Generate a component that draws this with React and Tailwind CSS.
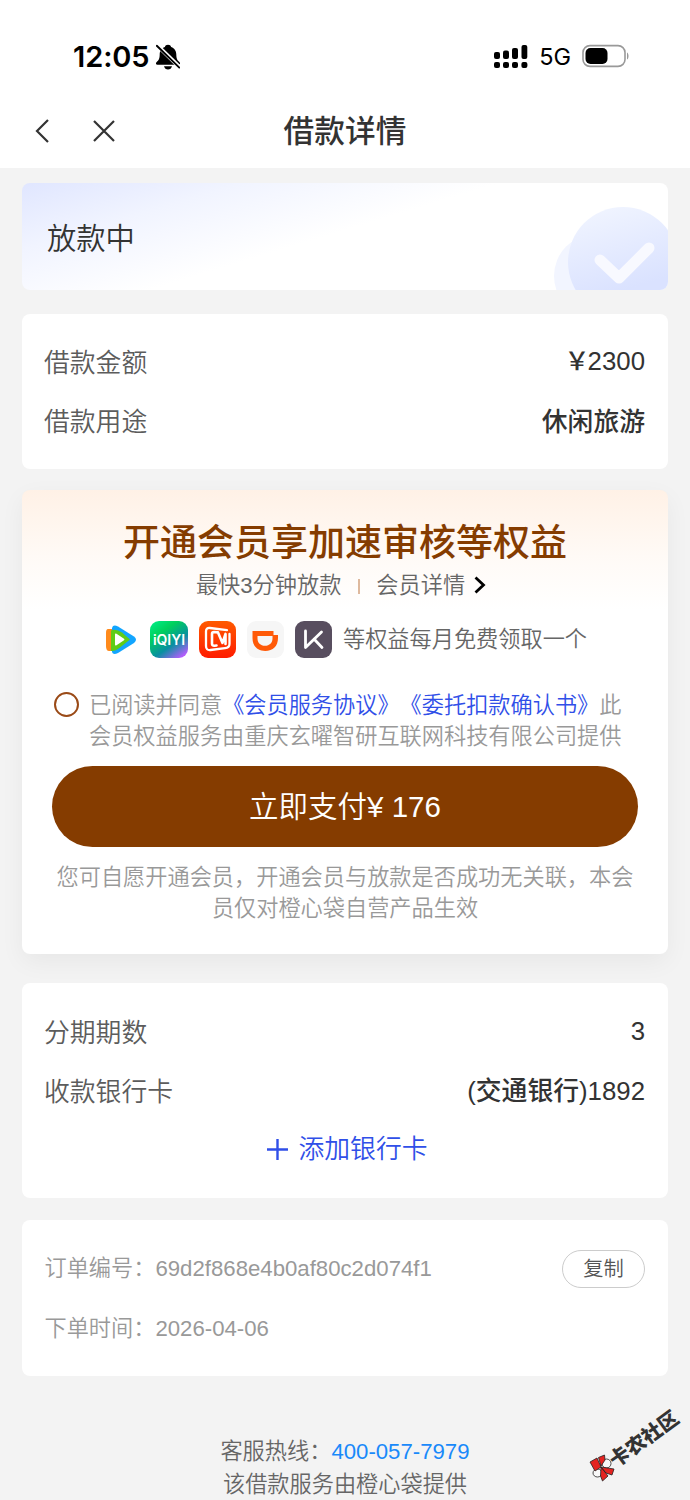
import React from "react";

function StatusBar() {
  return (
    <div className="flex h-[94px] items-start justify-between pt-[42px] pl-[73px] pr-[60px] text-black">
      <div className="flex items-center gap-[6px]">
        <span className="font-['Inter',sans-serif] text-[29px] leading-[29px] font-semibold tracking-[-0.1px]">12:05</span>
        <svg className="relative left-px" width="24" height="26" viewBox="0 0 24 26">
          <path d="M12 .8c-1.600 0-2.800.9-3.100 2.200C5.300 4.200 3.800 7.200 3.700 10.500c-.1 4.200-1 5.700-3 7.500-1.400 1.300-.9 2.700.7 2.700h21.200c1.600 0 2.100-1.400.7-2.700-2-1.800-2.900-3.300-3-7.500-.1-3.300-1.600-6.300-5.200-7.500C14.800 1.700 13.600.8 12 .8z" />
          <path d="M8 22.200h8c-.5 2-2 3.300-4 3.300s-3.500-1.300-4-3.300z" />
          <path d="M1 1.200 24 23.500" stroke="#fff" strokeWidth="4" />
          <path d="M.8 1.800 23.300 23.600" stroke="#000" strokeWidth="1.900" strokeLinecap="round" />
        </svg>
      </div>
      <div className="flex items-center">
        <svg width="34" height="25" viewBox="0 0 34 25">
          <rect x="0" y="8" width="6" height="7" rx="2" />
          <rect x="9" y="6.500" width="6" height="8.500" rx="2" />
          <rect x="18" y="4" width="6" height="11" rx="2" />
          <rect x="27.500" y="1" width="5.800" height="14" rx="2" />
          <rect x="0" y="18" width="6" height="6" rx="2" />
          <rect x="9" y="18" width="6" height="6" rx="2" />
          <rect x="18" y="18" width="6" height="6" rx="2" />
          <rect x="27.400" y="18" width="6" height="6" rx="2" />
        </svg>
        <span className="ml-[11px] pt-[2px] font-['Inter',sans-serif] text-[23.500px] leading-[26px] font-normal">5G</span>
        <svg className="ml-[11px]" width="48" height="24" viewBox="0 0 48 24">
          <rect x="1" y="1.600" width="42" height="20.800" rx="7" fill="none" stroke="#999" strokeWidth="1.600" />
          <rect x="3.500" y="4" width="22" height="16" rx="5" />
          <path d="M45 8.500c2 1 2 6 0 7z" fill="#999" />
        </svg>
      </div>
    </div>
  );
}

function NavBar() {
  return (
    <div className="grid h-[74px] grid-cols-[1fr_auto_1fr] items-center text-[#333]">
      <div className="flex items-center gap-[43px] pl-[35px]">
        <svg width="15" height="24" viewBox="0 0 15 24" fill="none" stroke="currentColor" strokeWidth="2.200">
          <path d="M13 1 2 12l11 11" />
        </svg>
        <svg width="22" height="22" viewBox="0 0 22 22" fill="none" stroke="currentColor" strokeWidth="2.200">
          <path d="m1 1 20 20M21 1 1 21" />
        </svg>
      </div>
      <h1 className="pt-[3px] text-[30.700px] font-medium">借款详情</h1>
    </div>
  );
}

function StatusCard() {
  return (
    <div className="flex h-[107px] items-center justify-between overflow-hidden rounded-lg bg-[linear-gradient(163deg,#e0e6ff_0%,#f1f4ff_22%,#ffffff_48%)] pl-[25px]">
      <span className="pt-[5px] text-[29.300px] font-[350] text-[#333]">放款中</span>
      <svg width="116" height="107" viewBox="0 0 116 107">
        <defs>
          <linearGradient id="disc" x1="0.3" y1="0" x2="0.600" y2="1">
            <stop offset="0" stopColor="#f0f4ff" />
            <stop offset="0.750" stopColor="#dae2ff" />
          </linearGradient>
        </defs>
        <circle cx="44" cy="93" r="42" fill="#f2f5ff" />
        <circle cx="71" cy="79" r="55" fill="url(#disc)" />
        <path d="m48 77 19 18 30-30" fill="none" stroke="#f8f9ff" strokeWidth="11" strokeLinecap="round" strokeLinejoin="round" />
      </svg>
    </div>
  );
}

function Row({ label, children }) {
  return (
    <div className="flex h-[59.500px] items-center justify-between text-[25.800px]">
      <span className="-ml-px pt-[3px] font-[350] text-[#5c5c5c]">{label}</span>
      <span className="font-medium text-[#333]">{children}</span>
    </div>
  );
}

function TencentVideo() {
  return (
    <svg width="34" height="37" viewBox="0 0 34 37">
      <path d="M3 8h6v22H4Q1 30 1 25V12Q1 8 3 8z" fill="#ff8a1c" />
      <path d="M7 7q1-4 6-1.500l16 10q4 3 0 6.500L13 32q-5 2.500-6-1z" fill="#12a5ff" />
      <path d="M6 9.500q5-2 11 2l8 7-10 8q-5 4-9 3.500z" fill="#5fcc18" />
      <path d="M10 13.500v10q0 1.500 1.500.7l7.500-5q1-.7 0-1.500l-7.500-5q-1.500-.8-1.500.8z" fill="#fff" />
    </svg>
  );
}

function Iqiyi() {
  return (
    <div className="flex h-[37px] w-[38px] items-center justify-center rounded-[9px] bg-[linear-gradient(145deg,#00f08a_0%,#00d05c_30%,#0890a0_62%,#b85cff_92%)]">
      <span className="font-['Inter',sans-serif] text-[14px] leading-none font-semibold text-white">iQIYI</span>
    </div>
  );
}

function MangoTv() {
  return (
    <svg width="37" height="37" viewBox="0 0 37 37">
      <defs>
        <linearGradient id="mango" x1="0" y1="0" x2="0" y2="1">
          <stop offset="0" stopColor="#ff5a00" />
          <stop offset="1" stopColor="#ff1c00" />
        </linearGradient>
      </defs>
      <rect width="37" height="37" rx="9" fill="url(#mango)" />
      <g fill="none" stroke="#fff" strokeLinejoin="round" strokeLinecap="round">
        <path d="M28 9.200 11 7Q7 6.500 7 10.500V25q0 4.500 4.500 4L26 27.200q4.500-.5 4.500-4.200V13" strokeWidth="2.300" />
        <path d="M17.500 24.500l-2 .2q-2.500.2-2.500-2V13q0-2 2-2l4 .4 4.500 10.500 3-9V23" strokeWidth="2.600" />
      </g>
    </svg>
  );
}

function Didi() {
  return (
    <svg width="37" height="37" viewBox="0 0 37 37">
      <rect width="37" height="37" rx="9" fill="#f6f6f6" />
      <path
        d="M5.500 10H26.500v4H31v3c0 8-5 13-12.800 13S5.500 25 5.500 17zM10.500 15v2.500c0 4.200 3 7.300 7.500 7.300s7.500-3.100 7.500-7.300V15z"
        fill="#ff5a08"
        fillRule="evenodd"
      />
    </svg>
  );
}

function Keep() {
  return (
    <svg width="37" height="37" viewBox="0 0 37 37">
      <rect width="37" height="37" rx="9" fill="#584e5f" />
      <path d="M10.500 10v16.500l16-15.500M19 18l8 8.500" fill="none" stroke="#fff" strokeWidth="2.800" strokeLinecap="round" strokeLinejoin="round" />
    </svg>
  );
}

function MemberCard() {
  return (
    <section className="mt-[21px] h-[464px] rounded-lg bg-white bg-[linear-gradient(180deg,#fff1e6_0%,#fffaf6_55%,#ffffff_100%)] bg-[length:100%_120px] bg-no-repeat px-[30px] pt-[29px] shadow-[0_8px_24px_rgba(0,0,0,0.05)]">
      <h2 className="text-center text-[37px] leading-[50px] font-medium whitespace-nowrap text-[#853c00]">开通会员享加速审核等权益</h2>
      <div className="flex h-[34px] items-center justify-center pr-[8px] text-[22.200px] font-[350] text-[#666]">
        <span>最快3分钟放款</span>
        <i className="mr-[16px] ml-[17px] h-[15px] w-[2px] bg-[#deb99e]" />
        <span>会员详情</span>
        <svg className="mb-[2px] ml-[9px]" width="12" height="18" viewBox="0 0 12 18" fill="none" stroke="#000" strokeWidth="2.800">
          <path d="m1.500 1.500 8 7.500-8 7.500" />
        </svg>
      </div>
      <div className="mt-[18px] flex h-[37px] items-center pl-[53px] text-[22.200px] font-[350] text-[#666]">
        <div className="flex items-center gap-[11px]">
          <TencentVideo />
          <Iqiyi />
          <MangoTv />
          <Didi />
          <Keep />
        </div>
        <span className="ml-[11px] whitespace-nowrap">等权益每月免费领取一个</span>
      </div>
      <div className="mt-[32px] flex h-[62px] items-start pl-[2px] text-[22.200px] leading-[31px] font-[350] text-[#999]">
        <span className="mt-[2px] mr-[10px] size-[25px] shrink-0 rounded-full border-2 border-[#9a4a17]" />
        <p className="whitespace-nowrap [text-spacing-trim:space-all]">
          已阅读并同意<span className="text-[#304fe8]">《会员服务协议》《委托扣款确认书》</span>此
          <br />
          会员权益服务由重庆玄曜智研互联网科技有限公司提供
        </p>
      </div>
      <button className="mt-[14px] flex h-[81px] w-full items-center justify-center rounded-full bg-[#853c00] pt-px text-[29.500px] font-[350] text-white">
        立即支付¥ 176
      </button>
      <p className="mt-[15px] text-center text-[22.200px] leading-[31px] font-[350] whitespace-nowrap text-[#999]">
        您可自愿开通会员，开通会员与放款是否成功无关联，本会
        <br />
        员仅对橙心袋自营产品生效
      </p>
    </section>
  );
}

function Watermark() {
  return (
    <div className="absolute top-[1400px] left-[588px] h-[90px] w-[102px]">
      <svg className="absolute top-[54px] left-px" width="26" height="28" viewBox="0 0 26 28" stroke="#222" strokeWidth="0.800">
        <ellipse cx="17.500" cy="9.500" rx="4.500" ry="4.500" fill="#f8f8f8" />
        <ellipse cx="8.500" cy="19" rx="4.500" ry="4" fill="#f8f8f8" />
        <path d="m12 13-6 4-5-9 7-4zM12 12 9.500 3.500l6-2.500.5 5zM12 13l13 2-2 6-6-2zM12 13l7 9-5.500 5-2-5z" fill="#e42320" />
      </svg>
      <span className="absolute top-[26px] left-[16px] rotate-[-36deg] text-[20px] leading-[26px] font-black whitespace-nowrap text-[#333]">
        卡农社区
      </span>
    </div>
  );
}

export default function App() {
  return (
    <div className="relative h-[1500px] w-[690px] overflow-hidden bg-[#f3f3f3] font-['Liberation_Sans','Noto_Sans_CJK_SC',sans-serif]">
      <header className="bg-white">
        <StatusBar />
        <NavBar />
      </header>

      <main className="px-[22px] pt-[15px]">
        <StatusCard />

        <section className="mt-6 h-[155px] rounded-lg bg-white px-[23px] pt-[18px]">
          <Row label="借款金额">
            <span className="text-[25px]">￥</span>
            <span className="-ml-[2px] font-normal">2300</span>
          </Row>
          <Row label="借款用途"><span className="inline-block pt-[3px]">休闲旅游</span></Row>
        </section>

        <MemberCard />

        <section className="mt-[29px] h-[215px] rounded-lg bg-white px-[23px] pt-[19px]">
          <Row label="分期期数"><span className="font-normal">3</span></Row>
          <Row label="收款银行卡">
            <span className="font-normal">(</span>交通银行<span className="font-normal">)1892</span>
          </Row>
          <div className="flex h-[56px] items-center justify-center gap-[11px] pl-[4px] text-[25.800px] font-[350] text-[#304fe8]">
            <svg width="21" height="21" viewBox="0 0 21 21" stroke="currentColor" strokeWidth="2.400">
              <path d="M10.500 0v21M0 10.500h21" />
            </svg>
            <span className="pt-px">添加银行卡</span>
          </div>
        </section>

        <section className="mt-[22px] h-[156px] rounded-lg bg-white pr-[23px] pl-[22.500px] pt-[19px] text-[22.200px] font-[350] text-[#999]">
          <div className="flex h-[60px] items-center justify-between">
            <span>订单编号：69d2f868e4b0af80c2d074f1</span>
            <button className="h-[38px] w-[83px] rounded-full border border-[#ccc] text-[20.300px] leading-[34px] text-[#555]">复制</button>
          </div>
          <div className="flex h-[60px] items-center">下单时间：2026-04-06</div>
        </section>

        <footer className="mt-[59px] text-center text-[22.200px] leading-[33px] font-[350] text-[#666]">
          <p>客服热线：<span className="text-[#1989fa]">400-057-7979</span></p>
          <p>该借款服务由橙心袋提供</p>
        </footer>
      </main>

      <Watermark />
    </div>
  );
}
